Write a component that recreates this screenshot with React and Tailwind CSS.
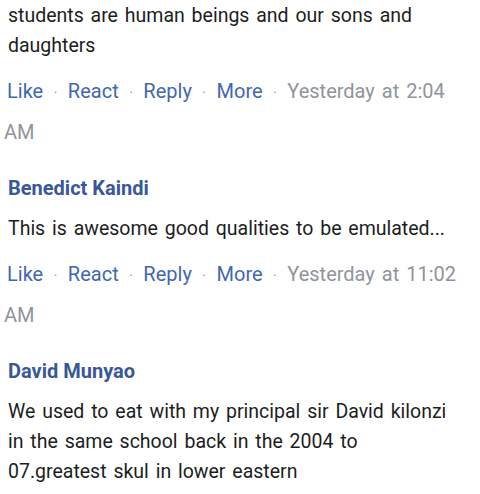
const Dot = () => <span className="mx-[10.5px] text-[#90949c] text-[14px]">·</span>

const Actions = ({ time }) => (
  <div className="-ml-1 -mr-4 pr-4 mt-[11px] leading-[39px] text-[20px] [word-spacing:2px]">
    <span className="ml-[3px] text-[#4267b2]">Like</span>
    <Dot />
    <span className="text-[#4267b2]">React</span>
    <Dot />
    <span className="text-[#4267b2]">Reply</span>
    <Dot />
    <span className="text-[#4267b2]">More</span>
    <Dot />
    <span className="text-[#90949c]">{time}</span>
  </div>
)

const Comment = ({ name, text, time }) => (
  <div>
    {name && <div className="font-bold text-[20px] leading-[24px] text-[#385898] mb-[14px]">{name}</div>}
    <p className="text-[19.5px] leading-[30px] text-[#1c1e21] [word-spacing:2px]">{text}</p>
    {time && <Actions time={time} />}
  </div>
)

const App = () => {
  return (
    <div className="w-[480px] h-[494px] overflow-hidden bg-white pl-2 pr-6 pt-[1px] font-['Roboto',sans-serif]">
      <Comment text="students are human beings and our sons and daughters" time="Yesterday at 2:04 AM" />
      <div className="mt-[24px]">
        <Comment name="Benedict Kaindi" text="This is awesome good qualities to be emulated..." time="Yesterday at 11:02 AM" />
      </div>
      <div className="mt-[24px]">
        <Comment name="David Munyao" text="We used to eat with my principal sir David kilonzi in the same school back in the 2004 to 07.greatest skul in lower eastern" />
      </div>
    </div>
  )
}

export default App
